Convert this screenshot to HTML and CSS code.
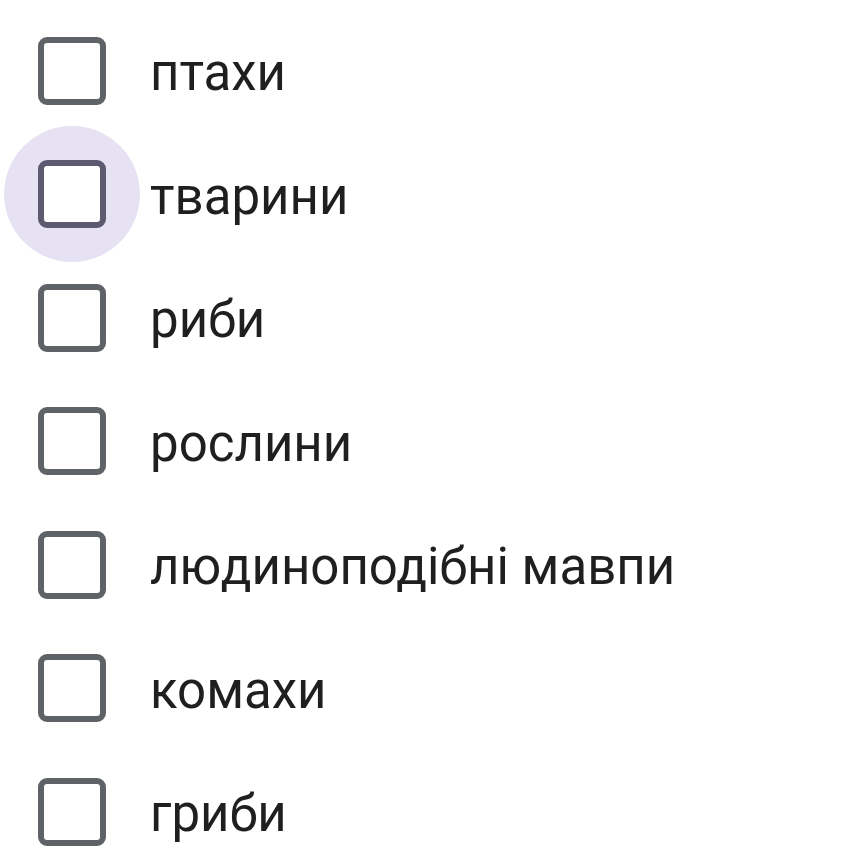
FILE: index.html
```html
<!DOCTYPE html>
<html lang="uk">
<head>
<meta charset="utf-8">
<link rel="stylesheet" href="styles.css">
</head>
<body>
<ul class="list">
  <li class="row"><span class="box"></span><span class="label">птахи</span></li>
  <li class="row"><span class="box focused"></span><span class="label">тварини</span></li>
  <li class="row"><span class="box"></span><span class="label">риби</span></li>
  <li class="row"><span class="box"></span><span class="label">рослини</span></li>
  <li class="row"><span class="box"></span><span class="label">людиноподібні мавпи</span></li>
  <li class="row"><span class="box"></span><span class="label">комахи</span></li>
  <li class="row"><span class="box"></span><span class="label">гриби</span></li>
</ul>
</body>
</html>
```
FILE: styles.css
```css
html {
  background: #ffffff;
}
body {
  margin: 0;
  padding: 0;
  font-family: Roboto, "Noto Sans", sans-serif;
  color: #1f1f1f;
}
.list {
  list-style: none;
  margin: 0;
  padding: 9px 0 0 38px;
  display: flex;
  flex-direction: column;
}
.row {
  height: 123.5px;
  display: flex;
  align-items: center;
}
.box {
  position: relative;
  width: 68px;
  height: 68px;
  box-sizing: border-box;
  border: 6px solid #5f6368;
  border-radius: 9px;
  background: #ffffff;
  flex: none;
}
.box.focused {
  border-color: #5c5a70;
}
.box.focused::before {
  content: "";
  position: absolute;
  left: 50%;
  top: 50%;
  width: 136px;
  height: 136px;
  margin: -68px 0 0 -68px;
  border-radius: 50%;
  background: #e6e2f3;
  z-index: -1;
}
.label {
  margin-left: 44px;
  font-size: 51px;
  line-height: 1;
  padding-top: 4px;
}
```
